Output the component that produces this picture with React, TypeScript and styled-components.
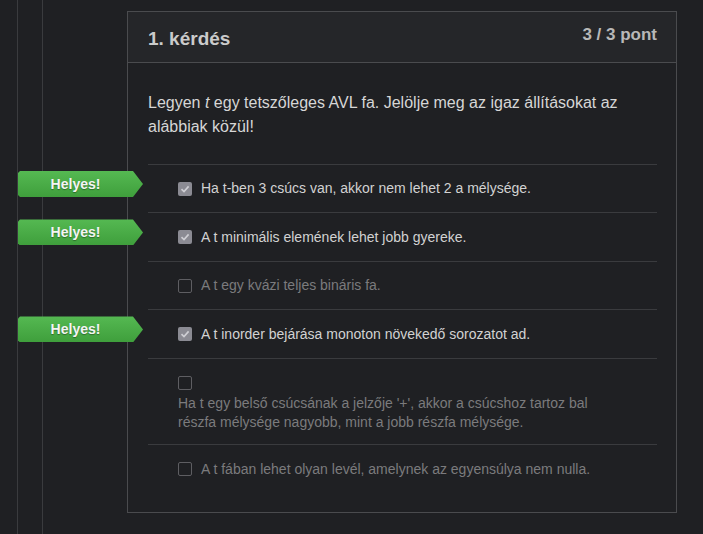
import React from "react";
import styled, { createGlobalStyle } from "styled-components";

const Global = createGlobalStyle`
  html, body { margin: 0; padding: 0; background: #1f2023; }
  body { font-family: "Liberation Sans", Arial, sans-serif; }
`;

const Page = styled.div`
  display: flex;
  align-items: flex-start;
  min-height: 534px;
`;

const Rail = styled.div`
  margin-left: 17px;
  width: 24px;
  align-self: stretch;
  border-left: 1px solid #3a3b3e;
  border-right: 1px solid #3a3b3e;
  flex-shrink: 0;
`;

const Card = styled.section`
  box-sizing: border-box;
  margin: 11px 0 0 84px;
  width: 550px;
  border: 1px solid #4a4b4e;
  background: #1f2023;
`;

const Header = styled.header`
  box-sizing: border-box;
  height: 51px;
  padding: 14px 19px 0 20px;
  background: #252629;
  border-bottom: 1px solid #4a4b4e;
  display: flex;
  justify-content: space-between;
  align-items: flex-start;
`;

const Title = styled.h3`
  margin: 1.5px 0 0;
  font-size: 19px;
  line-height: 22px;
  font-weight: bold;
  color: #cbcbcb;
`;

const Points = styled.div`
  margin-top: -1px;
  font-size: 17px;
  line-height: 19px;
  font-weight: bold;
  color: #b8b8b8;
`;

const Body = styled.div`
  padding: 0 19px 19.5px 20px;
`;

const Question = styled.p`
  margin: 28.3px 0 24.7px;
  font-size: 16px;
  line-height: 24px;
  color: #d6d6d6;
  em { font-style: italic; }
`;

const Options = styled.div`
  display: flex;
  flex-direction: column;
`;

const Row = styled.div`
  position: relative;
  border-top: 1px solid #3a3b3e;
  padding: 12px 30px 12px 30px;
`;

const Label = styled.label<{ $checked: boolean }>`
  display: flex;
  flex-wrap: wrap;
  align-items: center;
  font-size: 14px;
  line-height: 19px;
  color: ${(p) => (p.$checked ? "#d2d2d2" : "#7b7b7d")};
`;

const Box = styled.span<{ $checked: boolean }>`
  box-sizing: border-box;
  width: 14px;
  height: 14px;
  margin: 4.75px 9px 4.75px 0;
  border-radius: 2px;
  display: inline-flex;
  align-items: center;
  justify-content: center;
  background: ${(p) => (p.$checked ? "#8b8b93" : "transparent")};
  border: ${(p) => (p.$checked ? "none" : "1px solid #5e5e62")};
  flex-shrink: 0;
`;

const Text = styled.span`
  max-width: 100%;
`;

const Badge = styled.div`
  position: absolute;
  left: -130px;
  top: 6px;
  width: 125px;
  height: 26px;
  box-sizing: border-box;
  padding-right: 10px;
  display: flex;
  align-items: center;
  justify-content: center;
  background: linear-gradient(#55b952, #3f9f3c);
  clip-path: polygon(0 2px, 2px 0, 115px 0, 125px 13px, 115px 26px, 2px 26px, 0 24px);
  color: #f4f4f4;
  font-size: 14px;
  font-weight: bold;
  text-shadow: 0 1px 1px rgba(0, 0, 0, 0.35);
`;

const Check = () => (
  <svg width="10" height="10" viewBox="0 0 10 10">
    <path d="M1.5 5.2 L4 7.6 L8.6 2.4" fill="none" stroke="#cfcfd4" strokeWidth="1.6" />
  </svg>
);

const items = [
  { text: "Ha t-ben 3 csúcs van, akkor nem lehet 2 a mélysége.", checked: true },
  { text: "A t minimális elemének lehet jobb gyereke.", checked: true },
  { text: "A t egy kvázi teljes bináris fa.", checked: false },
  { text: "A t inorder bejárása monoton növekedő sorozatot ad.", checked: true },
  {
    text: "Ha t egy belső csúcsának a jelzője '+', akkor a csúcshoz tartoz bal részfa mélysége nagyobb, mint a jobb részfa mélysége.",
    checked: false,
  },
  { text: "A t fában lehet olyan levél, amelynek az egyensúlya nem nulla.", checked: false },
];

export default function App() {
  return (
    <>
      <Global />
      <Page>
        <Rail />
        <Card>
          <Header>
            <Title>1. kérdés</Title>
            <Points>3 / 3 pont</Points>
          </Header>
          <Body>
            <Question>
              Legyen <em>t</em> egy tetszőleges AVL fa. Jelölje meg az igaz állításokat az alábbiak közül!
            </Question>
            <Options>
              {items.map((it, i) => (
                <Row key={i}>
                  {it.checked && <Badge>Helyes!</Badge>}
                  <Label $checked={it.checked}>
                    <Box $checked={it.checked}>{it.checked && <Check />}</Box>
                    <Text>{it.text}</Text>
                  </Label>
                </Row>
              ))}
            </Options>
          </Body>
        </Card>
      </Page>
    </>
  );
}
